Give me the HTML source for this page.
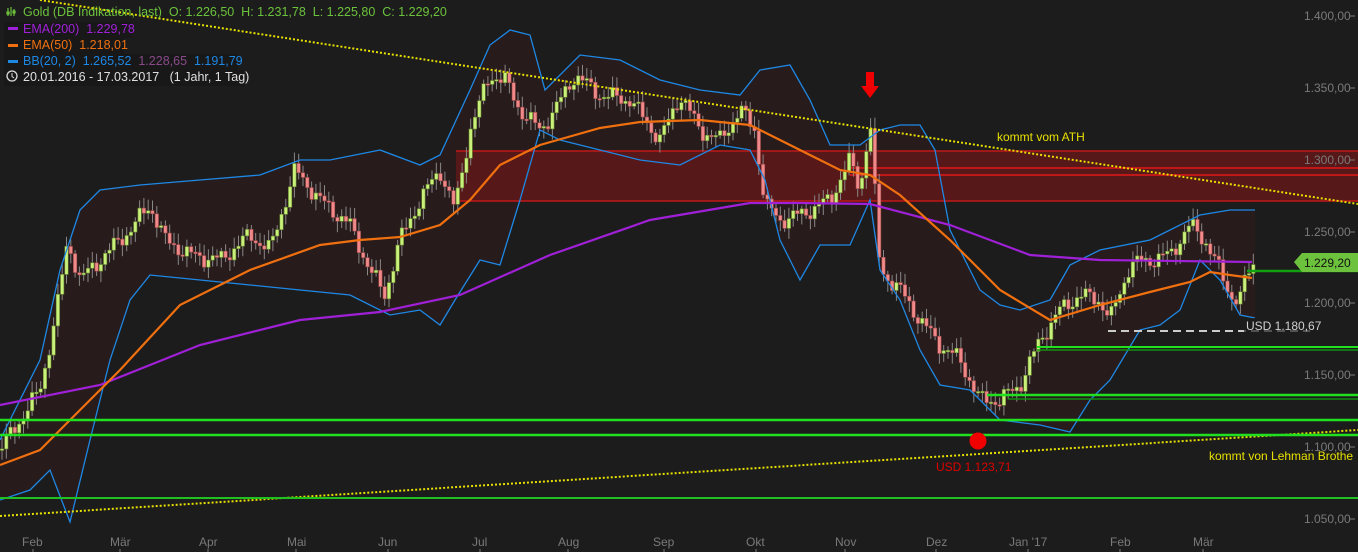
<!DOCTYPE html>
<html><head><meta charset="utf-8"><style>
html,body{margin:0;padding:0;background:#1c1c1c;overflow:hidden}
svg{display:block}
text{font-family:"Liberation Sans",sans-serif;white-space:pre}
</style></head><body>
<svg id="s" width="1358" height="552" xmlns="http://www.w3.org/2000/svg" xml:space="preserve">
<rect width="1358" height="552" fill="#1c1c1c"/>
<polygon id="bbf" fill="#2a1c1c" opacity="0.9"/>
<rect x="456" y="151" width="902" height="50" fill="#561818"/>
<line x1="456" y1="151" x2="1358" y2="151" stroke="#c01818" stroke-width="1.5"/>
<line x1="456" y1="201" x2="1358" y2="201" stroke="#c01818" stroke-width="1.5"/>
<line x1="850" y1="168" x2="1358" y2="168" stroke="#c01818" stroke-width="2"/>
<line x1="850" y1="175" x2="1358" y2="175" stroke="#c01818" stroke-width="2"/>
<g id="cd"></g>
<polyline id="bbu" fill="none" stroke="#1e88e5" stroke-width="1.3"/>
<polyline id="bbl" fill="none" stroke="#1e88e5" stroke-width="1.3"/>
<polyline id="e200" fill="none" stroke="#a020d8" stroke-width="2.2"/>
<polyline id="e50" fill="none" stroke="#f07010" stroke-width="2.2"/>
<line x1="40" y1="0" x2="1358" y2="204" stroke="#e8e000" stroke-width="2" stroke-dasharray="2,2"/>
<line x1="0" y1="516" x2="1358" y2="430" stroke="#e8e000" stroke-width="2" stroke-dasharray="2,2"/>
<line x1="0" y1="420" x2="1358" y2="420" stroke="#20e020" stroke-width="2.5"/>
<line x1="0" y1="435" x2="1358" y2="435" stroke="#20e020" stroke-width="2.5"/>
<line x1="0" y1="498" x2="1358" y2="498" stroke="#20c020" stroke-width="2"/>
<line x1="1037" y1="347" x2="1358" y2="347" stroke="#20e020" stroke-width="2"/>
<line x1="1037" y1="350" x2="1358" y2="350" stroke="#109010" stroke-width="1.5"/>
<line x1="987" y1="395" x2="1358" y2="395" stroke="#20e020" stroke-width="2.5"/>
<line x1="1008" y1="399" x2="1358" y2="399" stroke="#109010" stroke-width="1.5"/>
<line x1="1247" y1="271" x2="1358" y2="271" stroke="#10a010" stroke-width="2.5"/>
<line x1="1108" y1="331" x2="1310" y2="331" stroke="#cccccc" stroke-width="2" stroke-dasharray="8,5"/>
<circle cx="978" cy="441" r="8.5" fill="#f00000"/>
<polygon points="866,72 874,72 874,86 879,86 870,98 861,86 866,86" fill="#f00000"/>
<text x="997" y="141" font-size="12" fill="#e8e000">kommt vom ATH</text>
<text x="1209" y="460" font-size="12" fill="#e8e000">kommt von Lehman Brothe</text>
<text x="936" y="471" font-size="12" fill="#e00000">USD 1.123,71</text>
<rect x="1244" y="318" width="70" height="16" fill="#1c1c1c" opacity="0.7"/>
<text x="1246" y="330" font-size="12" fill="#d0d0d0">USD 1.180,67</text>
<g font-size="12" fill="#7a7a7a">
<text x="1304" y="20">1.400,00</text><text x="1304" y="92">1.350,00</text>
<text x="1304" y="164">1.300,00</text><text x="1304" y="236">1.250,00</text>
<text x="1304" y="307">1.200,00</text><text x="1304" y="379">1.150,00</text>
<text x="1304" y="451">1.100,00</text><text x="1304" y="523">1.050,00</text>
</g>
<g stroke="#7a7a7a"><line x1="1350" y1="16" x2="1355" y2="16"/><line x1="1350" y1="88" x2="1355" y2="88"/><line x1="1350" y1="160" x2="1355" y2="160"/><line x1="1350" y1="232" x2="1355" y2="232"/><line x1="1350" y1="303" x2="1355" y2="303"/><line x1="1350" y1="375" x2="1355" y2="375"/><line x1="1350" y1="447" x2="1355" y2="447"/><line x1="1350" y1="519" x2="1355" y2="519"/></g>
<polygon points="1294,262 1302,253 1358,253 1358,272 1302,272" fill="#6cc23c"/>
<text x="1304" y="267" font-size="12" fill="#111">1.229,20</text>
<g font-size="12" fill="#7a7a7a">
<text x="22" y="546">Feb</text><text x="110" y="546">Mär</text><text x="199" y="546">Apr</text>
<text x="287" y="546">Mai</text><text x="378" y="546">Jun</text><text x="472" y="546">Jul</text>
<text x="558" y="546">Aug</text><text x="653" y="546">Sep</text><text x="746" y="546">Okt</text>
<text x="835" y="546">Nov</text><text x="926" y="546">Dez</text><text x="1009" y="546">Jan '17</text>
<text x="1110" y="546">Feb</text><text x="1193" y="546">Mär</text>
</g>
<g stroke="#7a7a7a"><line x1="33" y1="549" x2="33" y2="552"/><line x1="120" y1="549" x2="120" y2="552"/><line x1="208" y1="549" x2="208" y2="552"/><line x1="296" y1="549" x2="296" y2="552"/><line x1="388" y1="549" x2="388" y2="552"/><line x1="480" y1="549" x2="480" y2="552"/><line x1="568" y1="549" x2="568" y2="552"/><line x1="664" y1="549" x2="664" y2="552"/><line x1="756" y1="549" x2="756" y2="552"/><line x1="845" y1="549" x2="845" y2="552"/><line x1="936" y1="549" x2="936" y2="552"/><line x1="1028" y1="549" x2="1028" y2="552"/><line x1="1120" y1="549" x2="1120" y2="552"/><line x1="1203" y1="549" x2="1203" y2="552"/></g>
<rect x="4" y="22" width="127" height="16" fill="#181818" opacity="0.8"/>
<rect x="4" y="38" width="120" height="16" fill="#181818" opacity="0.8"/>
<rect x="4" y="54" width="234" height="16" fill="#181818" opacity="0.8"/>
<rect x="4" y="70" width="240" height="16" fill="#181818" opacity="0.8"/>
<g font-size="12.5">
<g stroke="#6cc23c" stroke-width="1.2"><line x1="8" y1="8" x2="8" y2="16"/><line x1="11" y1="7" x2="11" y2="16"/><line x1="14" y1="9" x2="14" y2="16"/><rect x="7" y="12" width="2" height="2" fill="#6cc23c"/><rect x="13" y="11" width="2" height="2" fill="#6cc23c"/></g>
<text x="23" y="16" fill="#6cc23c">Gold (DB Indikation, last)  O: 1.226,50  H: 1.231,78  L: 1.225,80  C: 1.229,20</text>
<rect x="8" y="27" width="10" height="3" fill="#a020d8"/><text x="23" y="33" fill="#a020d8">EMA(200)  1.229,78</text>
<rect x="8" y="44" width="10" height="3" fill="#f07010"/><text x="23" y="49" fill="#f07010">EMA(50)  1.218,01</text>
<rect x="8" y="60" width="10" height="3" fill="#1e88e5"/><text x="23" y="65" fill="#1e88e5">BB(20, 2)  1.265,52  <tspan fill="#8a4a8a">1.228,65</tspan>  1.191,79</text>
<circle cx="12" cy="76" r="5" fill="none" stroke="#ddd" stroke-width="1.3"/><path d="M12 73v3.5l2 1.5" stroke="#ddd" fill="none"/>
<text x="23" y="81" fill="#e0e0e0">20.01.2016 - 17.03.2017   (1 Jahr, 1 Tag)</text>
</g>
</svg>
<script>
function P(a){return a.map(function(p){return p[0]+','+p[1]}).join(' ')}
var e200=[[0,405],[100,385],[200,345],[300,320],[380,312],[460,295],[550,255],[650,220],[750,203],[800,203],[870,204],[950,225],[1030,255],[1100,260],[1252,262]];
var e50=[[0,465],[40,450],[80,410],[120,370],[180,305],[250,270],[320,245],[360,240],[400,237],[440,225],[470,200],[500,165],[540,145],[600,128],[640,122],[700,120],[750,125],[800,150],[840,170],[870,175],[900,195],[950,240],[1000,290],[1050,320],[1100,305],[1150,292],[1190,282],[1210,272],[1230,275],[1252,278]];
var bu=[[0,440],[40,360],[60,270],[80,210],[100,190],[140,185],[200,180],[260,175],[300,160],[330,160],[380,150],[420,165],[440,155],[470,90],[490,45],[510,30],[530,35],[545,90],[580,55],[620,60],[660,80],[700,90],[740,95],[760,70],[790,65],[810,100],[830,145],[860,145],[880,130],[900,125],[920,125],[935,150],[950,230],[980,290],[1000,305],[1020,310],[1050,300],[1070,265],[1100,250],[1150,240],[1200,215],[1230,210],[1255,210]];
var bl=[[0,500],[30,490],[50,470],[70,522],[90,440],[110,360],[130,300],[150,275],[200,280],[250,285],[300,290],[350,295],[390,315],[420,310],[440,325],[455,300],[480,260],[500,265],[520,200],[540,130],[560,140],[600,150],[640,160],[680,165],[720,145],[750,150],[765,180],[780,240],[800,280],[820,245],[850,245],[870,200],[880,270],[900,300],[920,350],[940,385],[970,390],[1000,420],[1040,425],[1070,432],[1090,400],[1110,380],[1140,330],[1160,325],[1180,310],[1200,260],[1220,280],[1240,315],[1255,318]];
document.getElementById('e200').setAttribute('points',P(e200));
document.getElementById('e50').setAttribute('points',P(e50));
document.getElementById('bbu').setAttribute('points',P(bu));
document.getElementById('bbl').setAttribute('points',P(bl));
document.getElementById('bbf').setAttribute('points',P(bu.concat(bl.slice().reverse())));
var kp=[[0,450],[20,420],[40,390],[55,320],[68,240],[80,280],[100,260],[130,230],[150,205],[165,240],[190,255],[220,260],[250,235],[270,250],[295,170],[320,200],[350,225],[370,270],[385,295],[400,240],[420,200],[440,170],[455,210],[470,130],[490,75],[505,80],[520,110],[540,130],[555,110],[575,75],[600,95],[630,100],[660,140],[680,95],[700,130],[720,140],[740,110],[755,130],[765,205],[780,220],[800,215],[830,200],[850,160],[860,190],[870,120],[880,270],[900,290],[920,320],[940,345],[960,360],[980,400],[1000,400],[1020,385],[1040,340],[1060,310],[1080,295],[1100,300],[1110,320],[1130,265],[1150,260],[1170,255],[1190,225],[1205,240],[1215,260],[1230,295],[1240,300],[1245,280],[1255,262]];
function interp(x){for(var i=1;i<kp.length;i++){if(x<=kp[i][0]){var a=kp[i-1],b=kp[i];return a[1]+(b[1]-a[1])*(x-a[0])/(b[0]-a[0]);}}return kp[kp.length-1][1];}
var s='',prev=interp(0);
for(var x=2;x<=1254;x+=4.3){
 var c=interp(x)+Math.sin(x*1.7)*6+Math.sin(x*0.53)*4;
 var o=prev, up=c<o, t=Math.min(o,c), b=Math.max(o,c);
 if(b-t<1.5)b=t+1.5;
 var hi=t-3-Math.abs(Math.sin(x*2.3))*8, lo=b+3+Math.abs(Math.cos(x*1.9))*8;
 s+='<line x1="'+x+'" y1="'+hi+'" x2="'+x+'" y2="'+lo+'" stroke="#888" stroke-width="1"/>';
 s+='<rect x="'+(x-1.7)+'" y="'+t+'" width="3.4" height="'+(b-t)+'" fill="'+(up?'#c8f07a':'#f08a8a')+'" stroke="'+(up?'#6a8a30':'#a04848')+'" stroke-width="0.6"/>';
 prev=c;
}
document.getElementById('cd').innerHTML=s;
</script>
</body></html>
